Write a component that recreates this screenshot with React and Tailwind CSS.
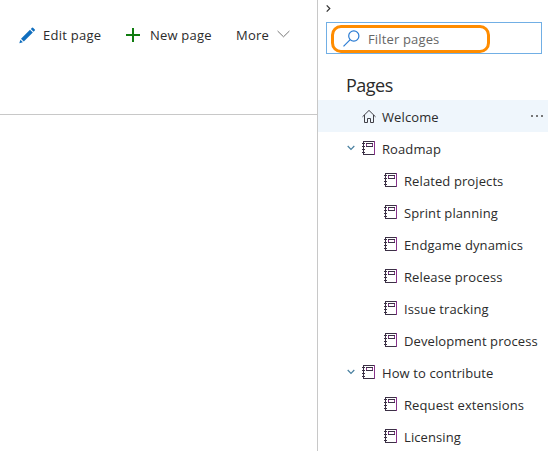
import React from 'react';

const rows = [
  { label: 'Welcome', kind: 'home' },
  { label: 'Roadmap', kind: 'group' },
  { label: 'Related projects' },
  { label: 'Sprint planning' },
  { label: 'Endgame dynamics' },
  { label: 'Release process' },
  { label: 'Issue tracking' },
  { label: 'Development process' },
  { label: 'How to contribute', kind: 'group' },
  { label: 'Request extensions' },
  { label: 'Licensing' },
];

function Notebook() {
  return (
    <svg width="14" height="14" viewBox="0 0 14 14" fill="none" className="shrink-0" shapeRendering="crispEdges">
      <path d="M1.5 0V14M1 .5H13M1 13.5H13" stroke="#3b3045" />
      <path d="M12.5 0V14" stroke="#87338b" />
      <path d="M0 2.5H3M0 5.5H3M0 8.5H3M0 11.5H3" stroke="#3b3045" />
      <path d="M4 2.5H11M4 5.5H11" stroke="#3b3045" />
      <path d="M4.5 3V5M10.5 3V5" stroke="#87338b" />
    </svg>
  );
}

function Home() {
  return (
    <svg width="14" height="14" viewBox="0 0 14 14" fill="none" stroke="#404047" className="shrink-0">
      <path d="M.5 7.8L7 1.4L13.5 7.8M2.5 6V13.5H5.5V9.5H8.5V13.5H11.5V6" />
    </svg>
  );
}

function Row({ label, kind }) {
  return (
    <li className={`flex h-8 items-center ${kind === 'home' ? 'bg-[#eff6fc]' : ''}`}>
      <span className={`flex shrink-0 justify-end ${kind ? 'w-11' : 'w-[66px]'}`}>
        {kind === 'group' && (
          <svg width="8" height="6" viewBox="0 0 8 6" fill="none" className="mr-[7px]">
            <path d="M.7 1L4 4.3L7.3 1" stroke="#477f9f" strokeWidth="1.2" />
          </svg>
        )}
      </span>
      {kind === 'home' ? <Home /> : <Notebook />}
      <span className="ml-1.5 mt-0.5 whitespace-nowrap tracking-[0.1px]">{label}</span>
      {kind === 'home' && (
        <span className="ml-auto mr-[5px] flex gap-[3px]">
          <i className="size-0.5 bg-[#777]" />
          <i className="size-0.5 bg-[#777]" />
          <i className="size-0.5 bg-[#777]" />
        </span>
      )}
    </li>
  );
}

export default function App() {
  return (
    <div className="flex h-[451px] w-[548px] overflow-hidden bg-white font-['Open_Sans',sans-serif] text-[13px] leading-5 text-[#2b2b2b]">
      <main className="w-[317px] shrink-0">
        <div className="flex h-[115px] items-start border-b border-[#c8c8c8] pl-[19px] pt-[25px]">
          <button className="flex h-5 w-[107px] items-center whitespace-nowrap tracking-[0.25px]">
            <svg width="17" height="17" viewBox="0 0 17 17" className="mr-[7px] shrink-0" fill="#106ebe">
              <path d="M2 11.8L11 2.8L13.8 5.6L4.8 14.6Z" />
              <path d="M11.8 2L13 .8Q13.5.3 14 .8L15.8 2.6Q16.3 3.1 15.8 3.6L14.6 4.8Z" />
              <path d="M1.4 12.7L3.9 15.2L.3 16.3Z" />
            </svg>
            Edit page
          </button>
          <button className="flex h-5 w-[110px] items-center whitespace-nowrap tracking-[0.2px]">
            <svg width="14" height="14" viewBox="0 0 14 14" className="mr-[10px] shrink-0">
              <path d="M7 0V14M0 7H14" stroke="#107c10" strokeWidth="2" />
            </svg>
            New page
          </button>
          <button className="flex h-5 items-center tracking-[0.2px]">
            More
            <svg width="13" height="8" viewBox="0 0 13 8" fill="none" className="-mt-0.5 ml-2">
              <path d="M.6 1L6.5 6.8L12.4 1" stroke="#777" />
            </svg>
          </button>
        </div>
      </main>
      <aside className="w-[231px] shrink-0 border-l border-[#c8c8c8]">
        <div className="flex h-[22px] pl-2 pt-[5px]">
          <svg width="5" height="7" viewBox="0 0 5 7" fill="none">
            <path d="M.7.4L3.8 3.5L.7 6.6" stroke="#333" strokeWidth="1.2" />
          </svg>
        </div>
        <div className="ml-2 h-8 w-[216px] border border-[#71afe5] pl-1 pt-0.5">
          <div className="flex h-7 w-[159px] items-center rounded-[10px] border-[3px] border-[#ff8c00] pl-[9px] text-[#666]">
            <svg width="17" height="17" viewBox="0 0 17 17" fill="none" stroke="#2b7cd3" strokeWidth="1.2" className="-mt-0.5 mr-2 shrink-0">
              <circle cx="10.8" cy="6" r="5.1" />
              <path d="M7.2 9.6L.5 16.3" />
            </svg>
            <span className="tracking-[0.15px]">Filter pages</span>
          </div>
        </div>
        <h1 className="mt-[19px] h-[27px] pl-7 text-[18px] leading-6 tracking-[-0.5px]">Pages</h1>
        <ul>
          {rows.map((row) => <Row key={row.label} {...row} />)}
        </ul>
      </aside>
    </div>
  );
}
